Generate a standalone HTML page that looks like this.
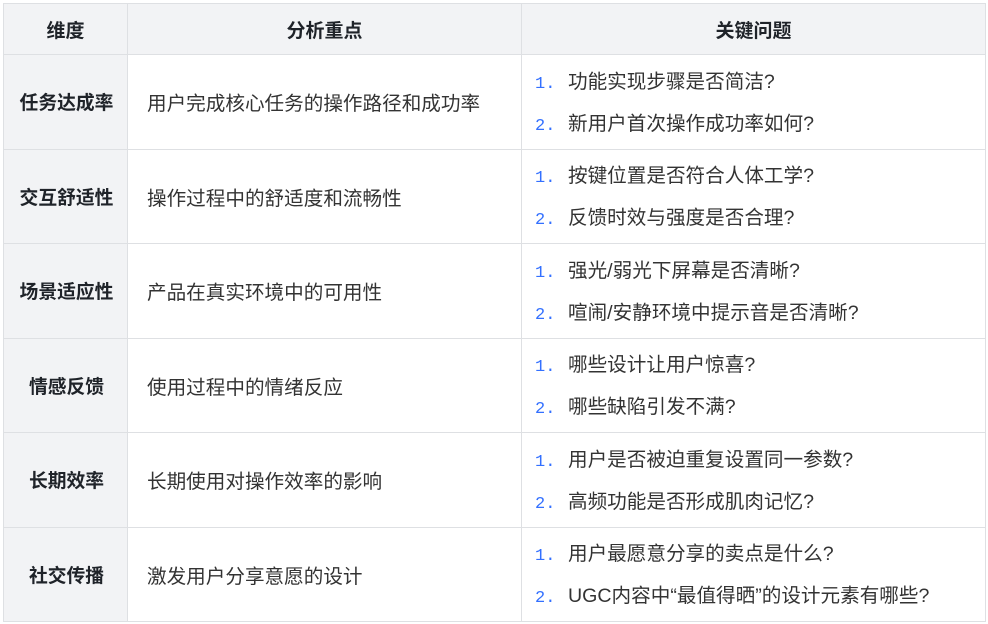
<!DOCTYPE html>
<html><head><meta charset="utf-8"><style>
body{margin:0;background:#fff;font-family:"Liberation Sans","Noto Sans CJK SC",sans-serif;color:#1f2329;}
table{position:absolute;left:3px;top:3px;border-collapse:collapse;table-layout:fixed;width:982px;font-size:19.6px;}
td,th{border:1px solid #dee0e3;padding:0;}
th{background:#f2f3f5;height:50px;font-weight:bold;font-size:19px;}
tr.r td{height:93.5px;}
td.d{background:#f2f3f5;font-weight:bold;text-align:center;font-size:18.8px;padding-left:2px;}
td.f{padding-left:19px;color:#333;}
td.q{padding-left:13px;color:#333;}
.q div{height:42px;line-height:42px;white-space:nowrap;}
.q div:first-child{margin-top:2px}
.q span{color:#3370ff;display:inline-block;width:33px;font-family:"Liberation Mono",monospace;font-size:17px;}
</style></head><body>
<table>
<colgroup><col style="width:124px"><col style="width:394px"><col style="width:464px"></colgroup>
<tr><th>维度</th><th>分析重点</th><th>关键问题</th></tr>
<tr class="r"><td class="d">任务达成率</td><td class="f">用户完成核心任务的操作路径和成功率</td><td class="q"><div><span>1.</span>功能实现步骤是否简洁?</div><div><span>2.</span>新用户首次操作成功率如何?</div></td></tr>
<tr class="r"><td class="d">交互舒适性</td><td class="f">操作过程中的舒适度和流畅性</td><td class="q"><div><span>1.</span>按键位置是否符合人体工学?</div><div><span>2.</span>反馈时效与强度是否合理?</div></td></tr>
<tr class="r"><td class="d">场景适应性</td><td class="f">产品在真实环境中的可用性</td><td class="q"><div><span>1.</span>强光/弱光下屏幕是否清晰?</div><div><span>2.</span>喧闹/安静环境中提示音是否清晰?</div></td></tr>
<tr class="r"><td class="d">情感反馈</td><td class="f">使用过程中的情绪反应</td><td class="q"><div><span>1.</span>哪些设计让用户惊喜?</div><div><span>2.</span>哪些缺陷引发不满?</div></td></tr>
<tr class="r"><td class="d">长期效率</td><td class="f">长期使用对操作效率的影响</td><td class="q"><div><span>1.</span>用户是否被迫重复设置同一参数?</div><div><span>2.</span>高频功能是否形成肌肉记忆?</div></td></tr>
<tr class="r"><td class="d">社交传播</td><td class="f">激发用户分享意愿的设计</td><td class="q"><div><span>1.</span>用户最愿意分享的卖点是什么?</div><div><span>2.</span>UGC内容中“最值得晒”的设计元素有哪些?</div></td></tr>
</table>
</body></html>
